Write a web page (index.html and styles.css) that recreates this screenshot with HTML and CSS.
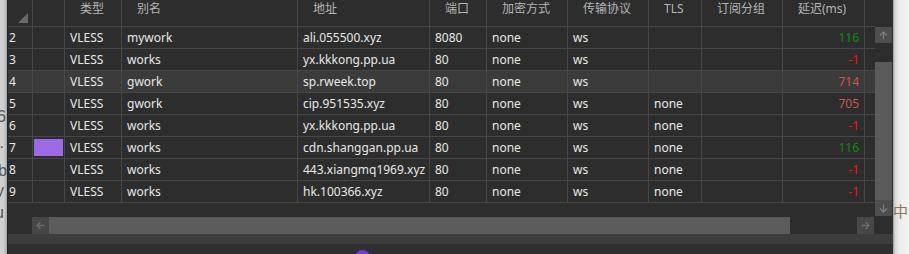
FILE: index.html
```html
<!DOCTYPE html>
<html>
<head>
  <title>Servers</title>
  <link rel="stylesheet" href="styles.css">
</head>
<body>
  <div class="behind">
    <div class="l1">6</div>
    <div class="l2">·</div>
    <div class="l3">b</div>
    <div class="l4">y</div>
    <div class="l5">u</div>
  </div>

  <div class="panel">
    <div class="view">
      <div class="row head">
        <div class="cell corner"><span class="tri"></span></div>
        <div class="cell"></div>
        <div class="cell">类型</div>
        <div class="cell">别名</div>
        <div class="cell">地址</div>
        <div class="cell">端口</div>
        <div class="cell">加密方式</div>
        <div class="cell">传输协议</div>
        <div class="cell">TLS</div>
        <div class="cell">订阅分组</div>
        <div class="cell">延迟(ms)</div>
        <div class="cell"></div>
      </div>

      <div class="row">
        <div class="cell num">2</div><div class="cell"></div>
        <div class="cell">VLESS</div><div class="cell">mywork</div>
        <div class="cell">ali.055500.xyz</div><div class="cell">8080</div>
        <div class="cell">none</div><div class="cell">ws</div>
        <div class="cell"></div><div class="cell"></div>
        <div class="cell delay good">116</div><div class="cell"></div>
      </div>
      <div class="row">
        <div class="cell num">3</div><div class="cell"></div>
        <div class="cell">VLESS</div><div class="cell">works</div>
        <div class="cell">yx.kkkong.pp.ua</div><div class="cell">80</div>
        <div class="cell">none</div><div class="cell">ws</div>
        <div class="cell"></div><div class="cell"></div>
        <div class="cell delay bad">-1</div><div class="cell"></div>
      </div>
      <div class="row selected">
        <div class="cell num">4</div><div class="cell"></div>
        <div class="cell">VLESS</div><div class="cell">gwork</div>
        <div class="cell">sp.rweek.top</div><div class="cell">80</div>
        <div class="cell">none</div><div class="cell">ws</div>
        <div class="cell"></div><div class="cell"></div>
        <div class="cell delay slow">714</div><div class="cell"></div>
      </div>
      <div class="row">
        <div class="cell num">5</div><div class="cell"></div>
        <div class="cell">VLESS</div><div class="cell">gwork</div>
        <div class="cell">cip.951535.xyz</div><div class="cell">80</div>
        <div class="cell">none</div><div class="cell">ws</div>
        <div class="cell">none</div><div class="cell"></div>
        <div class="cell delay slow">705</div><div class="cell"></div>
      </div>
      <div class="row">
        <div class="cell num">6</div><div class="cell"></div>
        <div class="cell">VLESS</div><div class="cell">works</div>
        <div class="cell">yx.kkkong.pp.ua</div><div class="cell">80</div>
        <div class="cell">none</div><div class="cell">ws</div>
        <div class="cell">none</div><div class="cell"></div>
        <div class="cell delay bad">-1</div><div class="cell"></div>
      </div>
      <div class="row">
        <div class="cell num">7</div><div class="cell swatch-cell"><span class="swatch"></span></div>
        <div class="cell">VLESS</div><div class="cell">works</div>
        <div class="cell">cdn.shanggan.pp.ua</div><div class="cell">80</div>
        <div class="cell">none</div><div class="cell">ws</div>
        <div class="cell">none</div><div class="cell"></div>
        <div class="cell delay good">116</div><div class="cell"></div>
      </div>
      <div class="row">
        <div class="cell num">8</div><div class="cell"></div>
        <div class="cell">VLESS</div><div class="cell">works</div>
        <div class="cell">443.xiangmq1969.xyz</div><div class="cell">80</div>
        <div class="cell">none</div><div class="cell">ws</div>
        <div class="cell">none</div><div class="cell"></div>
        <div class="cell delay bad">-1</div><div class="cell"></div>
      </div>
      <div class="row">
        <div class="cell num">9</div><div class="cell"></div>
        <div class="cell">VLESS</div><div class="cell">works</div>
        <div class="cell">hk.100366.xyz</div><div class="cell">80</div>
        <div class="cell">none</div><div class="cell">ws</div>
        <div class="cell">none</div><div class="cell"></div>
        <div class="cell delay bad">-1</div><div class="cell"></div>
      </div>
    </div>

    <div class="vbar">
      <div class="vhead"></div>
      <div class="btn">
        <svg width="9" height="9" viewBox="0 0 9 9"><path d="M4.5 8.5V1M1 4.5L4.5 1L8 4.5" fill="none" stroke="#7c7c7c" stroke-width="1.3"/></svg>
      </div>
      <div class="vtrack"></div>
      <div class="vthumb"></div>
      <div class="btn">
        <svg width="9" height="9" viewBox="0 0 9 9"><path d="M4.5 0.5V8M1 4.5L4.5 8L8 4.5" fill="none" stroke="#7c7c7c" stroke-width="1.3"/></svg>
      </div>
    </div>

    <div class="hbar">
      <div class="hspace"></div>
      <div class="btn">
        <svg width="9" height="9" viewBox="0 0 9 9"><path d="M8.5 4.5H1M4.5 1L1 4.5L4.5 8" fill="none" stroke="#6c6c6c" stroke-width="1.3"/></svg>
      </div>
      <div class="hthumb"></div>
      <div class="htrack"></div>
      <div class="btn">
        <svg width="9" height="9" viewBox="0 0 9 9"><path d="M0.5 4.5H8M4.5 1L8 4.5L4.5 8" fill="none" stroke="#6c6c6c" stroke-width="1.3"/></svg>
      </div>
    </div>
    <div class="sizer"></div>

    <div class="strip"></div>
    <div class="foot"><span class="dot"></span></div>
  </div>

  <div class="side"><span>中</span></div>
</body>
</html>
```

FILE: styles.css
```css
body {
  margin: 0;
  padding: 0;
  display: flex;
  height: 254px;
  overflow: hidden;
  background-color: #f2f2f2;
  font-family: "Noto Sans", "Noto Sans CJK SC", sans-serif;
  font-size: 12px;
}
.behind {
  width: 7px;
  flex: none;
  overflow: hidden;
  background: linear-gradient(to right, #d2d2d2 0, #cdcdcd 4px, #a9a9a9 7px);
  color: #555555;
  font-family: "Liberation Sans", sans-serif;
  font-size: 16px;
  line-height: 20px;
  padding-top: 107px;
  box-sizing: border-box;
}
.behind div {
  margin-left: -3px;
  white-space: nowrap;
}
.behind .l1 { height: 30px; }
.behind .l2 { height: 24px; margin-left: -1px; }
.behind .l3 { height: 20px; margin-left: -2px; }
.behind .l4 { height: 22px; margin-left: -4px; }
.behind .l5 { margin-left: -5px; }

.panel {
  width: 886px;
  flex: none;
  box-sizing: border-box;
  border-left: 1px solid #232323;
  background-color: #2d2d2d;
  display: grid;
  grid-template-columns: 867px 18px;
  grid-template-rows: 217px 17px 10px 10px;
}
.view {
  overflow: hidden;
}
.row {
  display: grid;
  grid-template-columns: 25px 32px 57px 176px 132px 57px 81px 81px 53px 81px 82px 40px;
  height: 22px;
  line-height: 21px;
  color: #e8e8e8;
}
.row.selected {
  background-color: #3b3b3b;
}
.cell {
  box-sizing: border-box;
  border-right: 1px solid #474747;
  border-bottom: 1px solid #474747;
  padding: 0 5px;
  white-space: nowrap;
  overflow: hidden;
}
.head {
  height: 27px;
  line-height: 16px;
  color: #b5b5b5;
}
.head .cell {
  padding: 1px 0 0 15px;
}
.head .corner {
  padding: 13px 0 0 10px;
}
.tri {
  display: block;
  width: 0;
  height: 0;
  border-left: 10px solid transparent;
  border-bottom: 10px solid #6a6a6a;
}
.cell.num {
  padding: 0 0 0 1px;
}
.delay {
  text-align: right;
}
.good { color: #0f8a0f; }
.bad { color: #ff1010; }
.slow { color: #c85656; }
.swatch-cell {
  padding: 2px 1px 1px 1px;
}
.swatch {
  display: block;
  height: 17px;
  background-color: #9b6ae4;
}

.vbar {
  display: flex;
  flex-direction: column;
}
.vhead {
  height: 27px;
}
.btn {
  width: 17px;
  height: 16px;
  flex: none;
  background-color: #4e4e4e;
  display: flex;
  align-items: center;
  justify-content: center;
}
.vtrack {
  height: 19px;
}
.vthumb {
  width: 17px;
  height: 138px;
  background-color: #5b5b5b;
}
.hbar {
  display: flex;
}
.hbar .btn {
  height: 17px;
  background-color: #474747;
}
.hspace {
  width: 24px;
}
.hthumb {
  width: 741px;
  background-color: #5c5c5c;
}
.htrack {
  width: 67px;
}
.strip {
  grid-column: 1 / 3;
  background-color: #3d3d3d;
}
.foot {
  grid-column: 1 / 3;
  background-color: #2f2f2f;
  overflow: hidden;
  padding: 6px 0 0 347px;
}
.dot {
  display: block;
  width: 15px;
  height: 15px;
  border-radius: 50%;
  background-color: #6b3fcf;
}

.side {
  flex: 1;
  background: linear-gradient(to right, #9d9d9d 0, #d6d6d6 2px, #ececec 6px, #f4f4f4 100%);
  padding-top: 201px;
  color: #8a7763;
  font-family: "Noto Sans CJK SC", sans-serif;
  font-size: 15px;
  line-height: 20px;
}
```
